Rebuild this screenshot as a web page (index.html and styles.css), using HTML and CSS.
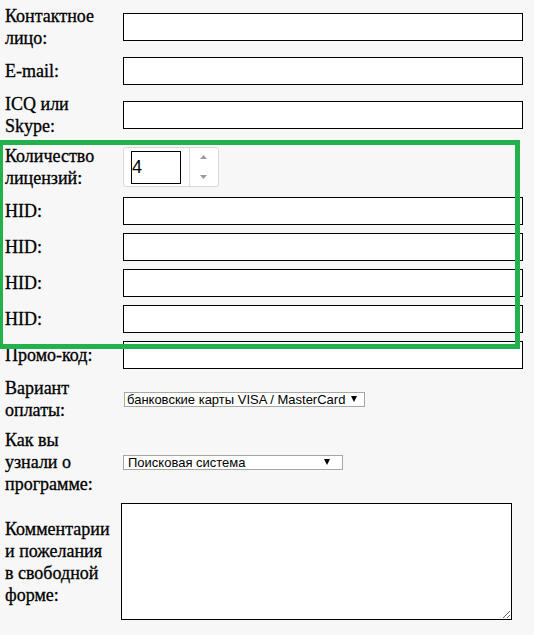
FILE: index.html
```html
<!DOCTYPE html>
<html lang="ru">
<head>
<meta charset="utf-8">
<title>Заказ</title>
<link rel="stylesheet" href="styles.css">
</head>
<body>
<form class="order">
  <label class="lbl">Контактное лицо:</label>
  <div class="fld"><input class="txt" type="text"></div>

  <label class="lbl">E-mail:</label>
  <div class="fld"><input class="txt" type="text"></div>

  <label class="lbl">ICQ или Skype:</label>
  <div class="fld"><input class="txt" type="text"></div>

  <label class="lbl">Количество лицензий:</label>
  <div class="fld">
    <div class="spin">
      <div class="spin-main"><input class="spin-input" type="text" value="4"></div>
      <div class="spin-btns">
        <svg class="arrow" width="7" height="4" viewBox="0 0 7 4"><polygon points="3.5,0 7,4 0,4"/></svg>
        <svg class="arrow" width="7" height="4" viewBox="0 0 7 4"><polygon points="0,0 7,0 3.5,4"/></svg>
      </div>
    </div>
  </div>

  <label class="lbl">HID:</label>
  <div class="fld"><input class="txt" type="text"></div>
  <label class="lbl">HID:</label>
  <div class="fld"><input class="txt" type="text"></div>
  <label class="lbl">HID:</label>
  <div class="fld"><input class="txt" type="text"></div>
  <label class="lbl">HID:</label>
  <div class="fld"><input class="txt" type="text"></div>

  <label class="lbl">Промо-код:</label>
  <div class="fld"><input class="txt" type="text"></div>

  <label class="lbl">Вариант оплаты:</label>
  <div class="fld">
    <div class="sel sel-pay"><span>банковские карты VISA / MasterCard</span><svg class="sel-arrow" width="6" height="6" viewBox="0 0 6 6"><polygon points="0,0 6,0 3,6"/></svg></div>
  </div>

  <label class="lbl">Как вы узнали о программе:</label>
  <div class="fld">
    <div class="sel sel-src"><span>Поисковая система</span><svg class="sel-arrow" width="6" height="6" viewBox="0 0 6 6"><polygon points="0,0 6,0 3,6"/></svg></div>
  </div>

  <label class="lbl">Комментарии и пожелания в свободной форме:</label>
  <div class="fld"><textarea class="area"></textarea></div>
</form>
<div class="highlight"></div>
</body>
</html>
```
FILE: styles.css
```css
html, body {
  margin: 0;
  padding: 0;
  background: #f7f7f7;
}
body {
  position: relative;
  width: 534px;
  height: 635px;
  overflow: hidden;
  font-family: "Liberation Serif", "Times New Roman", serif;
  font-size: 18px;
  line-height: 22px;
  color: #000;
}
.order {
  display: grid;
  grid-template-columns: 116px 1fr;
  row-gap: 8px;
  align-items: center;
  padding: 5px 0 0 5px;
}
.lbl {
  display: block;
  max-width: 110px;
  -webkit-text-stroke: 0.3px #000;
}
.fld {
  display: flex;
  align-items: center;
}
.txt {
  box-sizing: border-box;
  width: 400px;
  height: 28px;
  margin: 0 0 0 2px;
  border: 1px solid #000;
  background: #fff;
  padding: 1px 2px;
  font-family: "Liberation Sans", Arial, sans-serif;
  font-size: 14px;
}
.spin {
  box-sizing: border-box;
  display: flex;
  width: 96px;
  height: 40px;
  margin-left: 2px;
  border: 1px solid #d8d8d8;
  border-radius: 3px;
  background: #fff;
}
.spin-main {
  width: 65px;
  padding: 3px 0 0 7px;
  box-sizing: border-box;
}
.spin-input {
  box-sizing: border-box;
  width: 50px;
  height: 33px;
  margin: 0;
  padding: 0;
  border: 1px solid #000;
  background: #fff;
  font-family: "Liberation Sans", Arial, sans-serif;
  font-size: 18px;
  color: #000;
}
.spin-btns {
  flex: 1;
  border-left: 1px solid #dcdcdc;
  display: flex;
  flex-direction: column;
  justify-content: space-between;
  align-items: center;
  padding: 7px 1px 7px 0;
}
.arrow {
  display: block;
  fill: #9a9a9a;
}
.sel {
  box-sizing: border-box;
  display: flex;
  align-items: center;
  justify-content: space-between;
  height: 15px;
  border: 1px solid #a6a6a6;
  background: #fff;
  font-family: "Liberation Sans", Arial, sans-serif;
  font-size: 13px;
  line-height: 13px;
  color: #000;
}
.sel-pay {
  margin-left: 3px;
  padding: 0 7px 0 2px;
  gap: 6px;
}
.sel-src {
  margin-left: 2px;
  width: 220px;
  padding: 0 12px 0 4px;
}
.sel-arrow {
  display: block;
  fill: #000;
  flex: none;
}
.area {
  box-sizing: border-box;
  width: 391px;
  height: 117px;
  margin: 0;
  border: 1px solid #000;
  background: #fff;
  display: block;
}
.highlight {
  position: absolute;
  left: -2px;
  top: 140px;
  width: 522px;
  height: 209px;
  box-sizing: border-box;
  border: 5px solid #22b14c;
  pointer-events: none;
}
```
